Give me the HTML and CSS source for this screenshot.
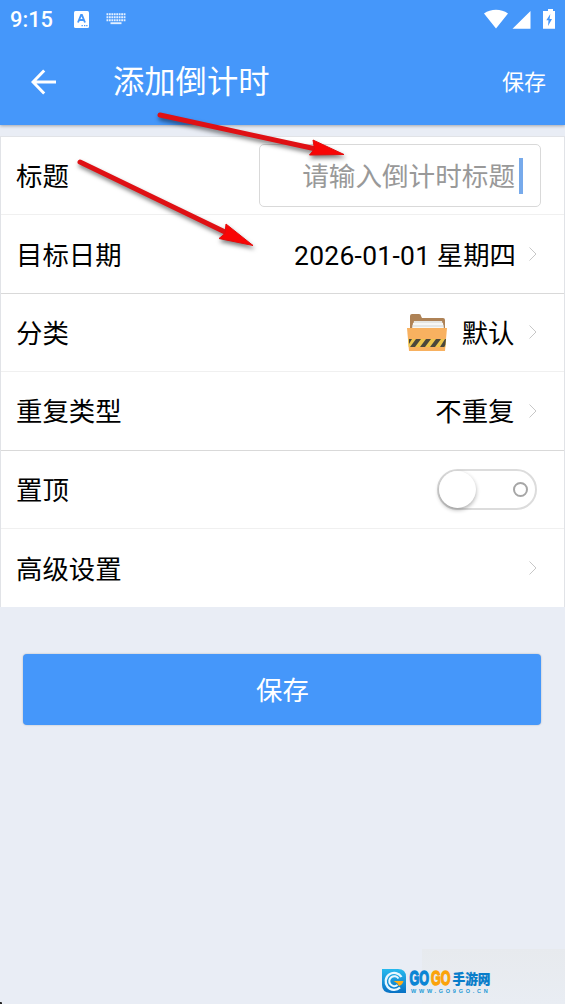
FILE: index.html
```html
<!DOCTYPE html>
<html lang="zh-CN">
<head>
<meta charset="utf-8">
<title>添加倒计时</title>
<link rel="stylesheet" href="styles.css">
</head>
<body>
<div class="screen">
  <header class="header">
    <div class="status">
      <span class="clock">9:15</span>
      <svg class="ime" width="15" height="17" viewBox="0 0 15 17"><rect width="15" height="17" rx="1.5" fill="#fff"/><path d="M4 11.5 7.1 4h.8L11 11.5M5.3 9h4.4" fill="none" stroke="#4597fa" stroke-width="1.9"/><path d="M7.5 14.7h1.3M10 14.7h1.3M12.2 14.7h1.3" stroke="#4597fa" stroke-width="1.3"/></svg>
      <svg class="keyboard" width="20" height="12" viewBox="0 0 20 12"><path d="M.5 1.2h19M.5 4.2h19M.5 7.2h19" stroke="#e4f0ff" stroke-width="2" stroke-dasharray="1.8 .65"/><path d="M4.5 10.2h11" stroke="#e4f0ff" stroke-width="1.9"/></svg>
      <svg class="signals" width="73" height="21" viewBox="0 0 73 21" fill="#fff"><path d="M1 4.5C8-.5 18-.5 25 4.5L13 19.5ZM47.5 2v17.8H29.5ZM63 2h2V0h5v2h2v17.8H60V2Z"/><path d="m67.3 5-4 6.2h2.2L65 17l4-7.1h-2.4Z" fill="#4597fa"/></svg>
    </div>
    <div class="appbar">
      <svg class="back" width="26" height="26" viewBox="0 0 26 26"><path d="M13.2 1.5 2 13l11.2 11.5M2 13h23" fill="none" stroke="#fff" stroke-width="3"/></svg>
      <h1 class="title">添加倒计时</h1>
      <span class="action">保存</span>
    </div>
  </header>
  <main class="list">
    <div class="row row-title"><span class="label">标题</span><div class="field"><span class="hint">请输入倒计时标题</span><i class="caret"></i></div></div>
    <div class="row strong"><span class="label">目标日期</span><span class="value date"><span class="digits">2026-01-01</span> 星期四</span><svg class="chevron" viewBox="0 0 8 14"><path d="m.5.5 6.5 6.5-6.5 6.5"/></svg></div>
    <div class="row"><span class="label">分类</span><span class="value category">
      <svg class="folder" width="40" height="38" viewBox="0 0 40 38"><path d="M3 2q0-2 2-2h7q2 0 2 2l1 2h21q2 0 2 2v12H3Z" fill="#ae8256"/><path d="M7 7h28l2 9H5Z" fill="#e5e5e2"/><path d="M6 9h30l1 7H5Z" fill="#f7f7f5"/><path d="M5 12h32" stroke="#d2d5d5"/><path d="M0 14h40l-2 23H2Z" fill="#f8b160"/><path d="M1 25h38l-.7 8H1.7Z" fill="#edc64d"/><path d="M2 25h3l-3 5ZM9 25h5l-6 8H3ZM19 25h5l-6 8h-5ZM29 25h5l-6 8h-5ZM38 25h1l-.7 6-1 2H33Z" fill="#4a473c"/></svg>
      <span class="label">默认</span></span><svg class="chevron" viewBox="0 0 8 14"><path d="m.5.5 6.5 6.5-6.5 6.5"/></svg></div>
    <div class="row strong"><span class="label">重复类型</span><span class="value repeat">不重复</span><svg class="chevron" viewBox="0 0 8 14"><path d="m.5.5 6.5 6.5-6.5 6.5"/></svg></div>
    <div class="row"><span class="label">置顶</span><div class="switch"><i class="knob"></i><i class="off"></i></div></div>
    <div class="row last"><span class="label">高级设置</span><svg class="chevron only" viewBox="0 0 8 14"><path d="m.5.5 6.5 6.5-6.5 6.5"/></svg></div>
  </main>
  <button class="submit">保存</button>

  <svg class="arrows" width="565" height="300" viewBox="0 0 565 300">
    <g class="arrow"><path class="shaft" d="M160 115 316 149"/><path class="head" d="m313 140 31 14.5-34.5.5 5-6Z"/></g>
    <g class="arrow"><path class="shaft" d="m80 162 145 70"/><path class="head" d="m226 224 27 21.5-34-7 6-5Z"/></g>
  </svg>

  <div class="patch"></div>
  <div class="brand">
    <svg class="brand-mark" width="26" height="26" viewBox="0 0 26 26">
      <defs><linearGradient id="blue" x2="0" y2="1"><stop stop-color="#27b9ee"/><stop offset="1" stop-color="#0871c4"/></linearGradient></defs>
      <path d="M1 1h16q8 0 8 8v16H9q-8-1-8-8Z" fill="url(#blue)"/>
      <path d="M20.5 9a8.5 8.5 0 1 0-1.5 10.5" fill="none" stroke="#e9f8ff" stroke-width="2.3"/>
      <path d="M17.5 10.5a5 5 0 1 0-1 6.5" fill="none" stroke="#e7f7ff" stroke-width="2"/>
      <path d="M12.5 13h10q-1 4-4.5 5l-1.5-2.5Z" fill="#ffad18"/>
    </svg>
    <div class="brand-words">
      <svg width="86" height="19" viewBox="0 0 86 19">
        <text class="gogo blue" x="2.5" y="17" textLength="19.5" lengthAdjust="spacingAndGlyphs">GO</text>
        <text class="gogo gold" x="24" y="17" textLength="19.5" lengthAdjust="spacingAndGlyphs">GO</text>
        <text class="brand-cn" x="45.5" y="16" textLength="38" lengthAdjust="spacingAndGlyphs">手游网</text>
      </svg>
      <span class="brand-url">WWW.GO9GO.CN</span>
    </div>
  </div>
  <i class="corner"></i>
</div>
</body>
</html>
```
FILE: styles.css
```css
* { box-sizing: border-box; }
body { margin: 0; }
.screen {
  position: relative;
  width: 565px;
  height: 1004px;
  overflow: hidden;
  background: #e9edf5;
  color: #000;
  font: 26.4px/36px Roboto, "Noto Sans CJK SC", sans-serif;
}
.header {
  height: 125px;
  background: #4597fa;
  color: #fff;
  box-shadow: 0 1px 3px rgba(0, 0, 0, .3);
}
.status { display: flex; align-items: center; height: 38px; padding: 0 9px; }
.clock { font: 500 21.8px/38px Roboto, sans-serif; width: 65px; padding: 2px 0 0 1px; }
.keyboard { margin-left: 17px; }
.signals { margin-left: auto; }
.appbar { display: flex; align-items: center; height: 87px; padding: 0 19px 0 31px; }
.title { margin: 0 0 0 56px; padding-top: 3px; font-size: 31.3px; line-height: 46px; font-weight: 400; }
.action { margin-left: auto; padding-top: 2px; font-size: 22px; }
.list {
  margin-top: 11px;
  background: #fff;
  border: 1px solid #e1e3e7;
  border-bottom: 0;
}
.row {
  display: flex;
  align-items: center;
  height: 78.4px;
  padding: 0 27px 0 15px;
  border-bottom: 1px solid #f0f0f0;
}
.row.strong { border-color: #d9d9d9; }
.row.last { border-bottom: 0; }
.row-title { padding-right: 23px; }
.label, .value.date, .value.repeat { padding-top: 3px; }
.field {
  display: flex;
  align-items: center;
  justify-content: flex-end;
  width: 282px;
  height: 63px;
  margin-left: auto;
  padding-right: 17px;
  border: 1px solid #d9d9d9;
  border-radius: 5px;
}
.hint { padding-top: 3px; color: #999; font-size: 26.6px; }
.caret { width: 4px; height: 36px; margin-left: 4px; background: #77aaeb; }
.value { margin-left: auto; }
.digits { letter-spacing: .3px; }
.category { display: flex; align-items: center; gap: 15px; margin-right: 1.5px; }
.folder { margin-top: 2px; }
.repeat { margin-right: 1.5px; }
.chevron { width: 8px; height: 14px; margin-left: 13px; fill: none; stroke: #c7c7c7; stroke-width: 1; }
.chevron.only { margin-left: auto; }
.switch {
  display: flex;
  align-items: center;
  justify-content: space-between;
  width: 100px;
  height: 41px;
  margin-left: auto;
  margin-right: .5px;
  padding-right: 7px;
  border: 2px solid #dcdcdc;
  border-radius: 21px;
}
.knob { width: 37px; height: 37px; border-radius: 50%; background: #fff; box-shadow: 0 2px 4px rgba(0, 0, 0, .32); }
.off { width: 15px; height: 15px; border: 2px solid #a6a6a6; border-radius: 50%; }
.submit {
  display: block;
  width: 518px;
  height: 71px;
  margin: 47px 0 0 23.4px;
  padding: 2px 0 0;
  border: 0;
  border-radius: 4px;
  background: #4597fa;
  box-shadow: 0 0 2px rgba(0, 0, 0, .25);
  color: #fff;
  font: inherit;
}
.arrows { position: absolute; left: 0; top: 0; }
.arrow { filter: drop-shadow(1px 3px 2px rgba(0, 0, 0, .5)); }
.shaft { fill: none; stroke: #df1014; stroke-width: 5; stroke-linecap: round; }
.head { fill: #f80505; stroke: #e40b0b; stroke-width: 1; }
.patch { position: absolute; left: 422px; top: 949px; width: 143px; height: 55px; background: linear-gradient(#e7eaee, #e9edf3); }
.brand { position: absolute; left: 381px; top: 968px; display: flex; }
.brand-words { display: flex; flex-direction: column; }
.brand-words svg { display: block; }
.gogo { font: 700 19.5px "Liberation Sans", sans-serif; stroke-width: 1.4; }
.gogo.blue { fill: #0a84d4; stroke: #0a84d4; }
.gogo.gold { fill: #fba30a; stroke: #fba30a; }
.brand-cn { font: 900 14px "Noto Sans CJK SC", sans-serif; fill: #087dca; stroke: #087dca; stroke-width: .2; }
.brand-url { padding-left: 4px; font: 700 5.5px/8px "Liberation Sans", sans-serif; letter-spacing: 2.75px; color: #2399d7; white-space: nowrap; }
.corner { position: absolute; left: 0; bottom: 0; width: 2px; height: 2px; background: #222; border-top-right-radius: 1px; }
```
